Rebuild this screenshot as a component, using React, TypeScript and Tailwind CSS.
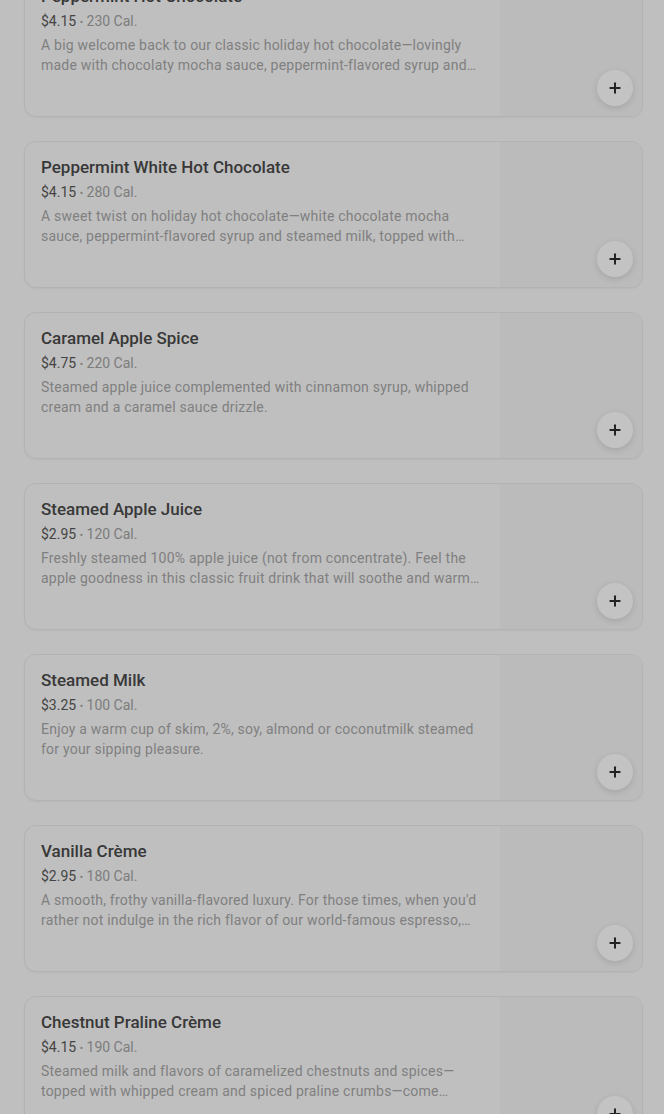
import { Plus } from 'lucide-react';

type Item = {
  name: string;
  price: string;
  cal: string;
  desc: string;
};

const items: Item[] = [
  {
    name: 'Peppermint Hot Chocolate',
    price: '$4.15',
    cal: '230 Cal.',
    desc: 'A big welcome back to our classic holiday hot chocolate\u2014lovingly made with chocolaty mocha sauce, peppermint-flavored syrup and steamed milk, topped with sweetened whipped cream.',
  },
  {
    name: 'Peppermint White Hot Chocolate',
    price: '$4.15',
    cal: '280 Cal.',
    desc: 'A sweet twist on holiday hot chocolate\u2014white chocolate mocha sauce, peppermint-flavored syrup and steamed milk, topped with sweetened whipped cream and dark chocolate curls.',
  },
  {
    name: 'Caramel Apple Spice',
    price: '$4.75',
    cal: '220 Cal.',
    desc: 'Steamed apple juice complemented with cinnamon syrup, whipped cream and a caramel sauce drizzle.',
  },
  {
    name: 'Steamed Apple Juice',
    price: '$2.95',
    cal: '120 Cal.',
    desc: 'Freshly steamed 100% apple juice (not from concentrate). Feel the apple goodness in this classic fruit drink that will soothe and warm you.',
  },
  {
    name: 'Steamed Milk',
    price: '$3.25',
    cal: '100 Cal.',
    desc: 'Enjoy a warm cup of skim, 2%, soy, almond or coconutmilk steamed for your sipping pleasure.',
  },
  {
    name: 'Vanilla Crème',
    price: '$2.95',
    cal: '180 Cal.',
    desc: "A smooth, frothy vanilla-flavored luxury. For those times, when you'd rather not indulge in the rich flavor of our world-famous espresso, this is a delightful option.",
  },
  {
    name: 'Chestnut Praline Crème',
    price: '$4.15',
    cal: '190 Cal.',
    desc: 'Steamed milk and flavors of caramelized chestnuts and spices\u2014topped with whipped cream and spiced praline crumbs\u2014come together in a festive treat.',
  },
];

function MenuCard({ item }: { item: Item }) {
  return (
    <div className="flex h-[147px] shrink-0 overflow-hidden rounded-xl border border-[#b3b3b3] bg-[#bfbfbf] shadow-[0_1px_2px_rgba(0,0,0,0.04)]">
      <div className="flex-1 pl-4 pr-4 pt-[13px]">
        <div className="text-[17px] font-medium leading-6 text-[#383838]">{item.name}</div>
        <div className="mt-[3px] text-sm leading-5">
          <span className="text-[#444]">{item.price}</span>
          <span className="text-[#7c7c7c]"> <span className="text-[10px]">•</span> {item.cal}</span>
        </div>
        <p className="mt-[2px] line-clamp-2 text-sm leading-5 tracking-[0.22px] text-[#808080]">{item.desc}</p>
      </div>
      <div className="relative w-[142px] bg-[#bbbbbb]">
        <button className="absolute bottom-[10px] right-[9px] flex h-9 w-9 items-center justify-center rounded-full bg-[#c3c3c3] text-[#222] shadow-[0_2px_6px_rgba(0,0,0,0.12)]">
          <Plus size={16} strokeWidth={3} />
        </button>
      </div>
    </div>
  );
}

export default function App() {
  return (
    <div
      className="h-[1114px] overflow-hidden bg-[#bfbfbf]"
      style={{ fontFamily: 'Roboto, "Noto Sans", sans-serif' }}
    >
      <div className="-mt-[30px] flex flex-col gap-6 pl-6 pr-[21px]">
        {items.map((item) => (
          <MenuCard key={item.name} item={item} />
        ))}
      </div>
    </div>
  );
}
